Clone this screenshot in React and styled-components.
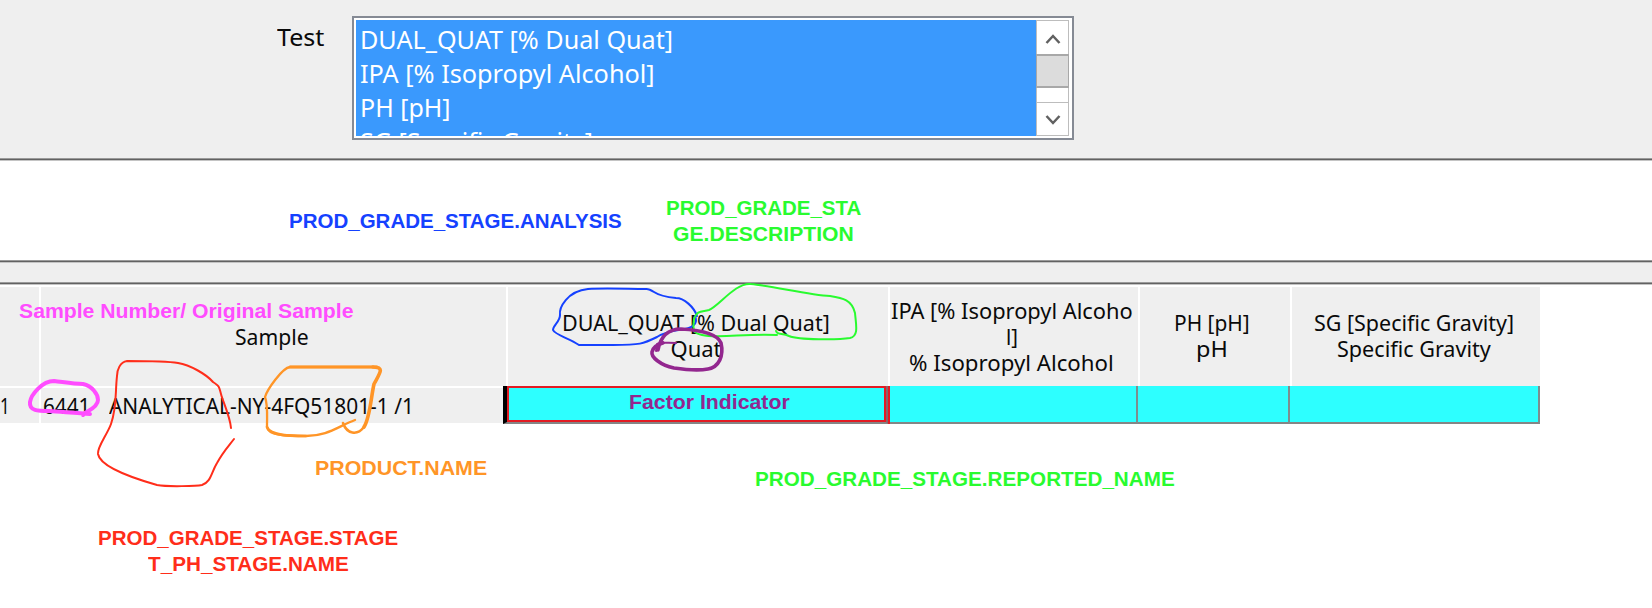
import React, { useLayoutEffect, useRef, useState } from "react";
import styled, { createGlobalStyle } from "styled-components";

const Global = createGlobalStyle`
  * { box-sizing: border-box; }
  body { margin: 0; background: #fff; overflow: hidden; }
`;

const Page = styled.div`
  position: relative;
  width: 1652px;
  height: 608px;
  overflow: hidden;
  font-family: "Noto Sans", "Open Sans", sans-serif;
  color: #0a0a0a;
`;

const Criteria = styled.section`
  height: 158px;
  display: flex;
  align-items: flex-start;
  padding: 16px 0 0 277px;
  background: #efefef;
`;

const Rule = styled.div`
  height: 3px;
  background: linear-gradient(#9a9a9a 0 1px, #626262 1px 2px, #c4c4c4 2px);
`;

const FieldLabel = styled.label`
  width: 75px;
  padding-top: 4px;
  line-height: 33px;
`;

const ListBox = styled.div`
  display: flex;
  width: 722px;
  height: 124px;
  padding: 2px 3px 2px 2px;
  background: #fff;
  border: 2px solid #858a94;
`;

const Options = styled.div`
  flex: 1;
  height: 116px;
  overflow: hidden;
  background: #3a99fd;
  color: #fff;
`;

const Option = styled.div`
  height: 34px;
  padding-left: 4px;
  line-height: 38px;
`;

const ScrollBar = styled.div`
  width: 33px;
  height: 116px;
  display: flex;
  flex-direction: column;
  border: 1px solid #bdbdbd;
  background: #fff;
`;

const ScrollButton = styled.div`
  height: 33px;
  display: flex;
  align-items: center;
  justify-content: center;
  padding-top: 3px;
  border-top: ${(p) => (p.$down ? "1px solid #bdbdbd" : "0")};
`;

const Thumb = styled.div`
  height: 35px;
  margin: 0 -1px 14px;
  background: #dcdcdc;
  border: 2px solid #a8a8a8;
  border-width: 2px 1px;
`;

const Blank = styled.div`
  height: 99px;
`;

const Splitter = styled.div`
  height: 19px;
  background: #efefef;
`;

const Grid = styled.div`
  display: grid;
  grid-template-columns: 41px 467px 382px 250px 152px 248px;
  grid-template-rows: 99px 39px;
  width: 1540px;
  margin-top: 2px;
`;

const HeadCell = styled.div`
  display: flex;
  flex-direction: column;
  align-items: center;
  padding-top: ${(p) => p.$top}px;
  padding-right: ${(p) => p.$shift || 0}px;
  background: #efefef;
  border-right: ${(p) => (p.$last ? "0" : "2px solid #fff")};
  line-height: 26px;
`;

const SampleCell = styled.div`
  display: flex;
  gap: ${(p) => p.$gap || 0}px;
  height: 37px;
  padding-left: ${(p) => p.$left}px;
  background: #efefef;
  border-top: 2px solid #fff;
  border-right: ${(p) => (p.$divider ? "2px solid #fff" : "0")};
  line-height: 34px;
`;

const ResultCell = styled.div`
  height: 38px;
  margin-left: -2px;
  margin-right: ${(p) => (p.$last ? 0 : 2)}px;
  background: #2dffff;
  border-right: 2px solid #7d8d8f;
  border-bottom: 2px solid #858585;
`;

const ActiveCell = styled(ResultCell)`
  position: relative;
  margin-left: -5px;
  border-left: 4px solid #000;
  border-right: 2px solid #8b6468;
  box-shadow: 2px 0 0 #e31b23;
`;

const Focus = styled.div`
  height: 36px;
  border: 2px solid #e31b23;
`;

const Slot = styled.span`
  display: flex;
  flex: none;
  width: ${(p) => p.$width}px;
`;

const Run = styled.span`
  display: block;
  flex: none;
  white-space: pre;
  font-size: ${(p) => p.$size}px;
  transform-origin: 0 50%;
`;

/* Text condensed or widened to fill an exact column width. */
function Fit({ width, size = 22, children }) {
  const ref = useRef(null);
  const [scale, setScale] = useState(1);
  useLayoutEffect(() => {
    setScale(width / ref.current.offsetWidth);
  }, [width, size, children]);
  return (
    <Slot $width={width}>
      <Run ref={ref} $size={size} style={{ transform: `scaleX(${scale})` }}>
        {children}
      </Run>
    </Slot>
  );
}

const Note = styled.div`
  position: absolute;
  left: ${(p) => p.$x}px;
  top: ${(p) => p.$y}px;
  display: flex;
  flex-direction: column;
  align-items: center;
  color: ${(p) => p.$color};
  font-family: "Liberation Sans", Arial, sans-serif;
  font-weight: 700;
  line-height: 26px;
`;

const Ink = styled.svg`
  position: absolute;
  inset: 0;
  pointer-events: none;
  fill: none;
  stroke-linecap: round;
  stroke-linejoin: round;
`;

const OPTIONS = [
  ["DUAL_QUAT [% Dual Quat]", 313],
  ["IPA [% Isopropyl Alcohol]", 295],
  ["PH [pH]", 91],
  ["SG [Specific Gravity]", 233],
];

const COLUMNS = [
  { top: 22, shift: 4, lines: [["DUAL_QUAT [% Dual Quat]", 268], ["Quat", 51]] },
  { top: 10, shift: 5, lines: [["IPA [% Isopropyl Alcoho", 242], ["l]", 12], ["% Isopropyl Alcohol", 205]] },
  { top: 22, shift: 6, lines: [["PH [pH]", 76], ["pH", 32]] },
  { top: 22, shift: 4, last: true, lines: [["SG [Specific Gravity]", 200], ["Specific Gravity", 154]] },
];

const NOTES = [
  { x: 289, y: 208, color: "#1541ff", lines: [["PROD_GRADE_STAGE.ANALYSIS", 333]] },
  { x: 666, y: 195, color: "#29fb2f", lines: [["PROD_GRADE_STA", 195], ["GE.DESCRIPTION", 181]] },
  { x: 19, y: 298, color: "#ff4cff", lines: [["Sample Number/ Original Sample", 334]] },
  { x: 315, y: 455, color: "#ff9527", lines: [["PRODUCT.NAME", 172]] },
  { x: 98, y: 525, color: "#ff2d1a", lines: [["PROD_GRADE_STAGE.STAGE", 300], ["T_PH_STAGE.NAME", 201]] },
  { x: 629, y: 389, color: "#93278f", lines: [["Factor Indicator", 161]] },
  { x: 755, y: 466, color: "#29fb2f", lines: [["PROD_GRADE_STAGE.REPORTED_NAME", 420]] },
];

const STROKES = [
  ["#ff4cff", 4, "M90 414 C79 413 62 412 49 411 C38 411 29 411 30 402 C31 395 42 381 54 381 C63 382 73 384 83 384 C92 386 98 394 98 400 C98 407 88 411 85 413 L83 415"],
  ["#ff2d1a", 2, "M231 428 C230 416 223 402 221 394 C219 386 219 386 213 382 C206 374 190 365 178 363 C166 361 140 361 127 361 C120 362 117 370 117 376 C115 394 117 407 111 424 C107 435 97 447 98 454 C100 466 129 477 157 485 C168 487 197 486 202 485 C211 482 211 473 217 463 C223 452 227 448 234 439"],
  ["#ff9527", 2.3, "M355 420 C337 427 327 436 306 436 C285 436 268 435 267 427 C267 414 268 405 265 397 C267 390 282 368 290 367 L377 367"],
  ["#ff9527", 3, "M290 367 L373 367"],
  ["#ff9527", 3.6, "M373 367 C385 367 380 373 374 384 C371 397 370 418 364 427"],
  ["#ff9527", 2.6, "M364 427 C357 436 347 434 343 423 M306 436 C292 436 270 436 267 427"],
  ["#1541ff", 2, "M697 316 C694 307 684 298 676 298 C666 297 660 296 654 292 C648 288 647 289 645 289 C629 289 605 288 588 289 C567 291 559 308 560 315 C560 322 553 325 553 330 C555 335 569 338 579 345 L613 345 C640 345 643 344 657 337 C666 331 679 330 685 329 C694 327 698 323 695 316"],
  ["#29fb2f", 2, "M776 331 C777 335 782 333 789 336 C799 340 838 340 850 338 C859 336 856 325 855 313 C852 300 843 298 830 296 C809 295 773 286 751 284 C736 282 719 306 709 310 C702 312 697 310 694 319 C693 329 692 333 702 335 C718 339 747 333 777 335"],
  ["#93278f", 2, "M676 343 C666 343 660 342 657 344 L656 351"],
  ["#93278f", 3.6, "M658 350 C661 334 670 329 681 329 C699 330 717 333 721 343 C724 356 719 367 708 369 C697 371 681 369 674 368 C660 365 651 357 652 352 C654 345 659 345 663 343"],
];

export default function App() {
  return (
    <Page>
      <Global />
      <Criteria>
        <FieldLabel>
          <Fit width={47} size={24}>Test</Fit>
        </FieldLabel>
        <ListBox>
          <Options>
            {OPTIONS.map(([text, width]) => (
              <Option key={text}>
                <Fit width={width} size={25}>{text}</Fit>
              </Option>
            ))}
          </Options>
          <ScrollBar>
            <ScrollButton>
              <svg width="16" height="12" fill="none" stroke="#616161" strokeWidth="2.5">
                <path d="M1.5 10 8 3 14.5 10" />
              </svg>
            </ScrollButton>
            <Thumb />
            <ScrollButton $down>
              <svg width="16" height="12" fill="none" stroke="#616161" strokeWidth="2.5">
                <path d="M1.5 1 8 8 14.5 1" />
              </svg>
            </ScrollButton>
          </ScrollBar>
        </ListBox>
      </Criteria>
      <Rule />
      <Blank />
      <Rule />
      <Splitter />
      <Rule />
      <Grid>
        <HeadCell />
        <HeadCell $top={36} $shift={3}>
          <Fit width={74}>Sample</Fit>
        </HeadCell>
        {COLUMNS.map((column, i) => (
          <HeadCell key={i} $top={column.top} $shift={column.shift} $last={column.last}>
            {column.lines.map(([text, width]) => (
              <Fit key={text} width={width}>{text}</Fit>
            ))}
          </HeadCell>
        ))}
        <SampleCell $left={0} $divider>
          <Fit width={10}>1</Fit>
        </SampleCell>
        <SampleCell $left={2} $gap={19}>
          <Fit width={47}>6441</Fit>
          <Fit width={305}>ANALYTICAL-NY-4FQ51801-1 /1</Fit>
        </SampleCell>
        <ActiveCell>
          <Focus />
        </ActiveCell>
        <ResultCell />
        <ResultCell />
        <ResultCell $last />
      </Grid>
      {NOTES.map((note) => (
        <Note key={note.lines[0][0]} $x={note.x} $y={note.y} $color={note.color}>
          {note.lines.map(([text, width]) => (
            <Fit key={text} width={width} size={21}>{text}</Fit>
          ))}
        </Note>
      ))}
      <Ink width="1652" height="608">
        {STROKES.map(([color, width, d], i) => (
          <path key={i} d={d} stroke={color} strokeWidth={width} />
        ))}
      </Ink>
    </Page>
  );
}
